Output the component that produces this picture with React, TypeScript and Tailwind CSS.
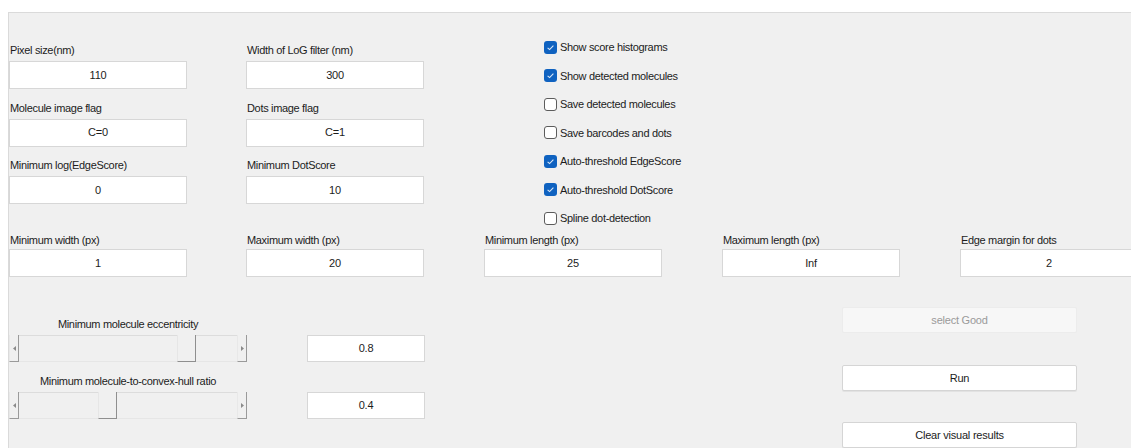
import type { ReactNode } from "react";

type Field = { label: string; value: string };

const topRows: Field[][] = [
  [
    { label: "Pixel size(nm)", value: "110" },
    { label: "Width of LoG filter (nm)", value: "300" },
  ],
  [
    { label: "Molecule image flag", value: "C=0" },
    { label: "Dots image flag", value: "C=1" },
  ],
  [
    { label: "Minimum log(EdgeScore)", value: "0" },
    { label: "Minimum DotScore", value: "10" },
  ],
];

const sizeRow: Field[] = [
  { label: "Minimum width (px)", value: "1" },
  { label: "Maximum width (px)", value: "20" },
  { label: "Minimum length (px)", value: "25" },
  { label: "Maximum length (px)", value: "Inf" },
  { label: "Edge margin for dots", value: "2" },
];

const options = [
  { label: "Show score histograms", checked: true },
  { label: "Show detected molecules", checked: true },
  { label: "Save detected molecules", checked: false },
  { label: "Save barcodes and dots", checked: false },
  { label: "Auto-threshold EdgeScore", checked: true },
  { label: "Auto-threshold DotScore", checked: true },
  { label: "Spline dot-detection", checked: false },
];

const font = "font-['Liberation_Sans',Arial,sans-serif]";

function EditBox({ value, className = "" }: { value: string; className?: string }) {
  return (
    <div
      className={`flex items-center justify-center bg-white border border-[#d7d7d7] text-[11px] text-[#1c1c1c] tracking-[-0.02em] ${className}`}
    >
      {value}
    </div>
  );
}

function LabeledField({ field, gap = "mb-[4px]", className = "" }: { field: Field; gap?: string; className?: string }) {
  return (
    <div className={`flex flex-col w-[178px] shrink-0 ${className}`}>
      <span className={`h-[14px] leading-[14px] text-[11px] text-[#1c1c1c] tracking-[-0.03em] pl-[1px] ${gap}`}>
        {field.label}
      </span>
      <EditBox value={field.value} className="h-[28px]" />
    </div>
  );
}

function CheckBox({ checked }: { checked: boolean }) {
  if (checked) {
    return (
      <span className="w-[13px] h-[13px] rounded-[3px] bg-[#0f62c0] flex items-center justify-center shrink-0">
        <svg width="9" height="9" viewBox="0 0 9 9">
          <polyline points="1.6,4.8 3.6,6.6 7.4,2.6" fill="none" stroke="#dbe8f8" strokeWidth="1.1" />
        </svg>
      </span>
    );
  }
  return <span className="w-[13px] h-[13px] rounded-[3px] bg-white border border-[#5c5c5c] shrink-0" />;
}

function ArrowButton({ dir }: { dir: "left" | "right" }) {
  return (
    <div className="w-[10px] h-full flex items-center justify-center bg-[#f0f0f0] border-r border-b border-[#9a9a9a] border-l border-l-[#e8e8e8]">
      <svg width="3" height="5" viewBox="0 0 3 5">
        {dir === "left" ? (
          <polygon points="3,0 0,2.5 3,5" fill="#8a8a8a" />
        ) : (
          <polygon points="0,0 3,2.5 0,5" fill="#8a8a8a" />
        )}
      </svg>
    </div>
  );
}

function Slider({ value }: { value: number }) {
  // track is 217px wide, thumb 19px
  const left = Math.round(value * (217 - 19));
  return (
    <div className="flex h-[27px] w-[238px]">
      <ArrowButton dir="left" />
      <div className="relative flex-1 border-t border-[#dcdcdc] border-b border-b-[#e6e6e6] bg-[#f0f0f0]">
        <div
          className="absolute top-[-1px] h-[27px] w-[19px] bg-[#f0f0f0] border-l border-[#e6e6e6] border-r border-r-[#8f8f8f] border-b border-b-[#8f8f8f]"
          style={{ left }}
        />
      </div>
      <ArrowButton dir="right" />
    </div>
  );
}

function PushButton({ children, disabled = false, className = "" }: { children: ReactNode; disabled?: boolean; className?: string }) {
  return (
    <div
      className={`w-[235px] flex items-center justify-center rounded-[2px] text-[11px] tracking-[-0.02em] ${
        disabled
          ? "bg-[#f7f7f7] border border-[#ececec] text-[#9a9a9a]"
          : "bg-white border border-[#d5d5d5] shadow-[0_1px_0_#e2e2e2] text-[#1c1c1c]"
      } ${className}`}
    >
      {children}
    </div>
  );
}

export default function App() {
  return (
    <div className={`w-[1131px] h-[448px] overflow-hidden bg-white pt-[12px] pl-[8px] ${font}`}>
      <div className="h-[460px] w-[1140px] bg-[#f0f0f0] border-l border-t border-[#dadada]">
        {/* edit boxes + option checkboxes */}
        <div className="flex h-[220px]">
          <div className="flex flex-col gap-[11.5px] pt-[30px] w-[416px] shrink-0">
            {topRows.map((row, i) => (
              <div key={i} className="flex gap-[59px]">
                {row.map((f) => (
                  <LabeledField key={f.label} field={f} />
                ))}
              </div>
            ))}
          </div>
          <div className="flex flex-col pt-[20px] ml-[119px]">
            {options.map((o) => (
              <div key={o.label} className="flex items-center gap-[3px] h-[28.5px]">
                <CheckBox checked={o.checked} />
                <span className="text-[11px] text-[#1c1c1c] tracking-[-0.03em] whitespace-nowrap">{o.label}</span>
              </div>
            ))}
          </div>
        </div>

        {/* size limits */}
        <div className="flex">
          {sizeRow.map((f, i) => (
            <LabeledField
              key={f.label}
              field={f}
              gap="mb-[2px]"
              className={i === 0 ? "" : i === 1 ? "ml-[59px]" : "ml-[60px]"}
            />
          ))}
        </div>

        {/* sliders, values and actions */}
        <div className="flex">
          <div className="flex flex-col pt-[40px] w-[238px] shrink-0">
            <span className="h-[14px] leading-[14px] text-[11px] text-[#1c1c1c] tracking-[-0.03em] text-center mb-[4px]">
              Minimum molecule eccentricity
            </span>
            <Slider value={0.8} />
            <span className="h-[14px] leading-[14px] text-[11px] text-[#1c1c1c] tracking-[-0.03em] text-center mt-[12px] mb-[4px]">
              Minimum molecule-to-convex-hull ratio
            </span>
            <Slider value={0.4} />
          </div>
          <div className="flex flex-col pt-[58px] gap-[30px] ml-[60px]">
            <EditBox value="0.8" className="w-[118px] h-[27px]" />
            <EditBox value="0.4" className="w-[118px] h-[27px]" />
          </div>
          <div className="flex flex-col pt-[30px] ml-[417px]">
            <PushButton disabled className="h-[26px]">select Good</PushButton>
            <PushButton className="h-[26px] mt-[32px]">Run</PushButton>
            <PushButton className="h-[26px] mt-[31px]">Clear visual results</PushButton>
          </div>
        </div>
      </div>
    </div>
  );
}
